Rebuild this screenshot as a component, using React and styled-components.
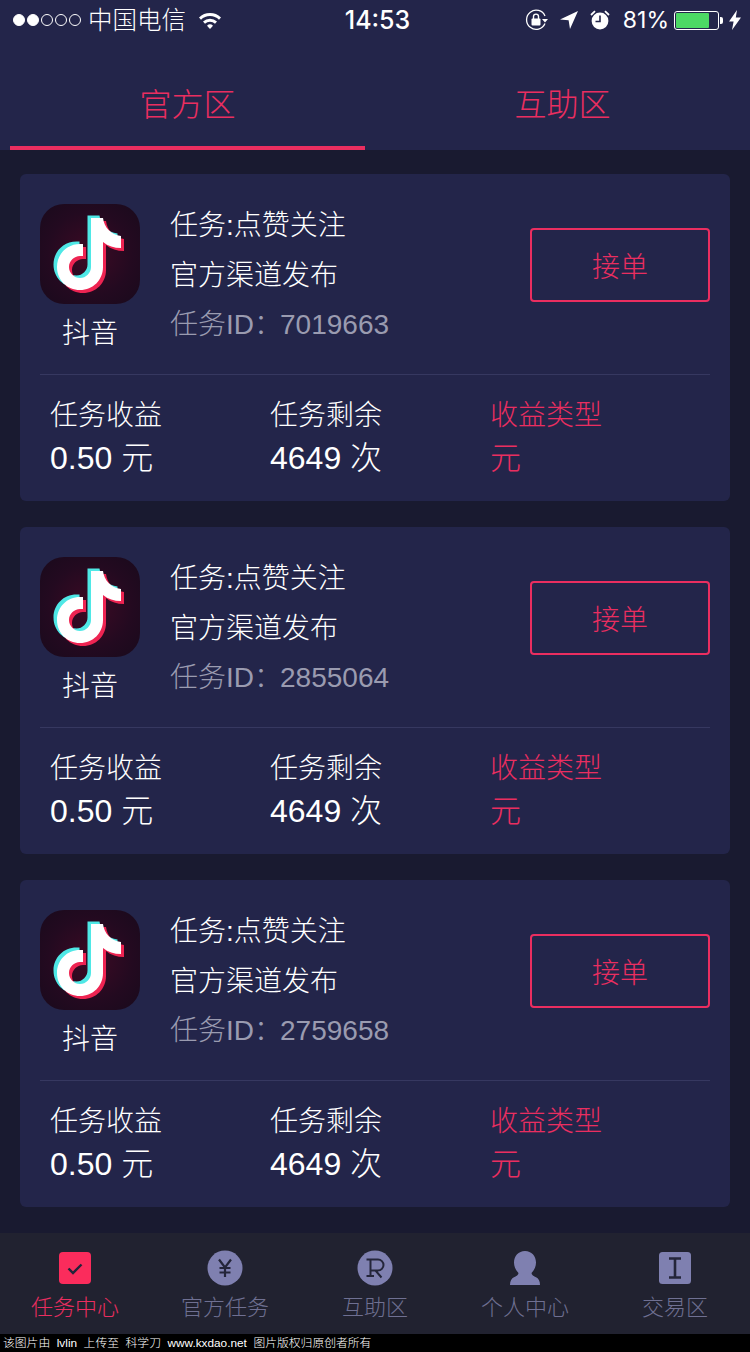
import React from 'react';
import styled, { createGlobalStyle } from 'styled-components';

const Global = createGlobalStyle`
  html, body { margin: 0; padding: 0; background: #191a30; }
  * { box-sizing: border-box; }
`;
const CJK = `"Liberation Sans", "Noto Sans CJK SC", sans-serif`;
const PINK = '#ea2e60';

const Page = styled.div`
  width: 750px; height: 1352px; display: flex; flex-direction: column; overflow: hidden;
  background: #191a30; font-family: ${CJK}; color: #fff;
`;
const StatusBar = styled.div`
  height: 40px; flex: none; background: #23254a; display: grid; grid-template-columns: 1fr auto 1fr;
  align-items: center; padding: 0 9px 0 13px; font-size: 24px;
`;
const StatusLeft = styled.div`display: flex; align-items: center;`;
const StatusRight = styled.div`display: flex; align-items: center; justify-content: flex-end;`;
const Dot = styled.span`
  width: 12px; height: 12px; border-radius: 50%; margin-right: 2px; flex: none;
  background: ${p => (p.$on ? '#fff' : 'transparent')}; border: 1px solid #fff;
`;
const Carrier = styled.span`margin: 0 12px 3px 5px; font-weight: 300; font-size: 24.5px;`;
const Time = styled.div`font-weight: 500; font-family: "Inter", sans-serif; font-size: 25px; margin-left: 1px;`;
const Percent = styled.span`margin: 0 5px 0 13px; font-family: "Inter", sans-serif; font-weight: 400; font-size: 23px; white-space: nowrap;`;
const Battery = styled.span`
  position: relative; width: 45px; height: 19px; border: 1px solid #fff; border-radius: 3px; padding: 1px; flex: none; margin-right: 10px;
`;
const BatteryFill = styled.span`display: block; height: 100%; width: 81%; background: #4cd964; border-radius: 1px;`;
const BatteryTip = styled.span`
  position: absolute; right: -5px; top: 5px; width: 3px; height: 7px; background: #fff; border-radius: 0 2px 2px 0;
`;

const Tabs = styled.div`
  height: 110px; flex: none; background: #23254a; display: flex; padding: 0 10px; 
`;
const Tab = styled.div`
  width: 355px; margin-right: ${p => (p.$last ? 0 : '20px')}; height: 110px; display: flex; align-items: center; justify-content: center;
  font-size: 32px; color: ${PINK}; padding-top: 18px; font-weight: 300;
  border-bottom: 4px solid ${p => (p.$active ? PINK : 'transparent')};
`;

const List = styled.div`
  flex: 1; min-height: 0; padding: 24px 20px 0; display: flex; flex-direction: column; gap: 26px; overflow: hidden;
`;
const Card = styled.div`
  height: 327px; flex: none; background: #23254a; border-radius: 6px; padding: 0 20px;
`;
const TopRow = styled.div`
  height: 201px; display: flex; align-items: flex-start; border-bottom: 1px solid #363860;
`;
const AppCol = styled.div`
  width: 100px; margin-top: 30px; display: flex; flex-direction: column; align-items: center; flex: none;
`;
const AppIcon = styled.div`
  width: 100px; height: 100px; border-radius: 24px; overflow: hidden;
  background: radial-gradient(circle at 50% 50%, #3d0a24 0%, #230a20 60%, #190a1c 100%);
`;
const AppName = styled.div`font-size: 28px; line-height: 40px; margin-top: 10px; font-weight: 300;`;
const Info = styled.div`margin: 27px 0 0 30px; font-size: 28px; line-height: 50px; font-weight: 300;`;
const InfoLine = styled.div`color: ${p => (p.$muted ? '#9a9bb0' : '#fff')}; white-space: nowrap; margin-top: ${p => (p.$muted ? '-1px' : 0)};`;
const IdMark = styled.span`margin-right: -2px;`;
const Button = styled.div`
  margin: 54px 0 0 auto; width: 180px; height: 74px; border: 2px solid ${PINK}; border-radius: 4px; display: flex;
  align-items: center; justify-content: center; font-size: 28px; color: ${PINK}; font-weight: 300;
`;
const Stats = styled.div`
  display: grid; grid-template-columns: 220px 220px 220px; padding: 20px 0 0 10px;
`;
const Stat = styled.div`font-size: 28px; color: ${p => (p.$pink ? PINK : '#fff')}; font-weight: 300;`;
const StatLabel = styled.div`line-height: 42px;`;
const StatValue = styled.div`line-height: ${p => (p.$big ? '42px' : '44px')}; font-size: ${p => (p.$big ? '32px' : '31px')};`;

const Nav = styled.div`
  height: 101px; flex: none; background: #212230; display: grid; grid-template-columns: repeat(5, 150px);
`;
const NavItem = styled.div`
  display: flex; flex-direction: column; align-items: center; padding-top: 17px; font-size: 22px; color: ${p => (p.$active ? PINK : '#6f7092')};
  font-weight: 300;
`;
const NavIconBox = styled.div`height: 36px; display: flex; align-items: center; justify-content: center;`;
const NavLabel = styled.div`line-height: 30px; margin-top: 7px;`;
const Watermark = styled.div`
  height: 18px; flex: none; background: #000; color: #fff; font-size: 11.8px; line-height: 18px; padding-left: 3px; white-space: pre;
  font-family: ${CJK}; overflow: hidden; font-weight: 300;
`;

const NOTE = 'M51 14h12c1 9 8 17 18 18v12c-7 0-13-2-18-6v25c0 13-10 23-23 23s-23-10-23-23s10-23 23-23c1 0 2 0 3 0v12c-1 0-2 0-3 0c-6 0-11 5-11 11s5 11 11 11s11-5 11-11z';
const TikTok = () => (
  <svg width="100" height="100" viewBox="0 0 100 100">
    <path d={NOTE} fill="#4fe8e6" transform="translate(-3.5 -2.5)" />
    <path d={NOTE} fill="#ee2452" transform="translate(3 3)" />
    <path d={NOTE} fill="#fff" />
  </svg>
);

const Wifi = () => (
  <svg width="24" height="18" viewBox="0 0 24 18" style={{ flex: 'none' }}>
    <path d="M1 6.5a16 16 0 0 1 22 0l-2 2.2a13 13 0 0 0-18 0z" fill="#fff" />
    <path d="M5 10.6a10 10 0 0 1 14 0l-2 2.2a7 7 0 0 0-10 0z" fill="#fff" />
    <path d="M9 14.7a4.4 4.4 0 0 1 6 0l-3 3.2z" fill="#fff" />
  </svg>
);
const RotLock = () => (
  <svg width="24" height="22" viewBox="0 0 24 22" style={{ flex: 'none' }}>
    <path d="M20 14.5A9.6 9.6 0 1 1 20 7" fill="none" stroke="#fff" strokeWidth="1.3" />
    <path d="M17 10h6l-3 3.4z" fill="#fff" />
    <rect x="6.5" y="9.5" width="9" height="7" rx="1" fill="#fff" />
    <path d="M8.5 10V7.6a2.5 2.5 0 0 1 5 0V10" fill="none" stroke="#fff" strokeWidth="1.4" />
  </svg>
);
const Locate = () => (
  <svg width="18" height="18" viewBox="0 0 18 18" style={{ flex: 'none', margin: '0 12px 0 11px' }}>
    <path d="M18 0L0 8.5l8.6.8L10 18z" fill="#fff" />
  </svg>
);
const Alarm = () => (
  <svg width="20" height="20" viewBox="0 0 20 20" style={{ flex: 'none' }}>
    <circle cx="10" cy="11" r="8.4" fill="#fff" />
    <path d="M10 5.5V11.5H5.5" fill="none" stroke="#23254a" strokeWidth="1.6" />
    <path d="M1 5L5 1.2M19 5L15 1.2" stroke="#fff" strokeWidth="1.8" />
  </svg>
);
const Bolt = () => (
  <svg width="12" height="20" viewBox="0 0 12 20" style={{ flex: 'none' }}>
    <path d="M8 0L0 11.5h4.6L3 20l9-12.5H6.8z" fill="#fff" />
  </svg>
);

const IC = '#7f80b0';
const IconCheck = () => (
  <svg width="32" height="32" viewBox="0 0 32 32">
    <rect width="32" height="32" rx="4" fill="#fb2c5c" />
    <path d="M9.5 16.5l4.5 4.5 8.5-8.5" fill="none" stroke="#23243a" strokeWidth="2.4" />
  </svg>
);
const IconYuan = () => (
  <svg width="36" height="36" viewBox="0 0 36 36">
    <circle cx="18" cy="18" r="17.5" fill={IC} />
    <path d="M12 9.5l6 8 6-8M18 17.5V27M12.5 18h11M12.5 22.5h11" fill="none" stroke="#24253a" strokeWidth="2.2" />
  </svg>
);
const IconR = () => (
  <svg width="36" height="36" viewBox="0 0 36 36">
    <circle cx="18" cy="18" r="17.5" fill={IC} />
    <path d="M9.5 9.5H21a5.2 5.2 0 0 1 0 11H13.5M13.5 9.5V26M9.5 26H17M18.5 20.5L24.5 27.5" fill="none" stroke="#24253a" strokeWidth="2" />
  </svg>
);
const IconUser = () => (
  <svg width="32" height="36" viewBox="0 0 32 36">
    <path d="M16 1c6.5 0 11 5 11 11.5c0 4.500-2 8-4.500 10.500c0 2 2 3 5 4.500c2 1 3.500 3.500 3.500 7.500H1c0-4 1.500-6.500 3.500-7.500c3-1.500 5-2.500 5-4.500C7 20.500 5 17 5 12.500C5 6 9.500 1 16 1z" fill={IC} />
  </svg>
);
const IconI = () => (
  <svg width="32" height="32" viewBox="0 0 32 32">
    <rect width="32" height="32" rx="3.500" fill={IC} />
    <path d="M10 6.500h12M10 25.500h12M16 6.500v19" fill="none" stroke="#24253a" strokeWidth="2.600" />
  </svg>
);

const TASKS = ['7019663', '2855064', '2759658'];
const NAV = [
  ['任务中心', IconCheck, true],
  ['官方任务', IconYuan, false],
  ['互助区', IconR, false],
  ['个人中心', IconUser, false],
  ['交易区', IconI, false],
];

export default function App() {
  return (
    <Page>
      <Global />
      <StatusBar>
        <StatusLeft>
          {[1, 1, 0, 0, 0].map((on, i) => <Dot key={i} $on={!!on} />)}
          <Carrier>中国电信</Carrier>
          <Wifi />
        </StatusLeft>
        <Time>14:53</Time>
        <StatusRight>
          <RotLock />
          <Locate />
          <Alarm />
          <Percent>81%</Percent>
          <Battery><BatteryFill /><BatteryTip /></Battery>
          <Bolt />
        </StatusRight>
      </StatusBar>
      <Tabs>
        <Tab $active>官方区</Tab>
        <Tab $last>互助区</Tab>
      </Tabs>
      <List>
        {TASKS.map(id => (
          <Card key={id}>
            <TopRow>
              <AppCol>
                <AppIcon><TikTok /></AppIcon>
                <AppName>抖音</AppName>
              </AppCol>
              <Info>
                <InfoLine>任务:点赞关注</InfoLine>
                <InfoLine>官方渠道发布</InfoLine>
                <InfoLine $muted><IdMark>任务ID：</IdMark>{id}</InfoLine>
              </Info>
              <Button>接单</Button>
            </TopRow>
            <Stats>
              <Stat>
                <StatLabel>任务收益</StatLabel>
                <StatValue $big>0.50 元</StatValue>
              </Stat>
              <Stat>
                <StatLabel>任务剩余</StatLabel>
                <StatValue $big>4649 次</StatValue>
              </Stat>
              <Stat $pink>
                <StatLabel>收益类型</StatLabel>
                <StatValue>元</StatValue>
              </Stat>
            </Stats>
          </Card>
        ))}
      </List>
      <Nav>
        {NAV.map(([label, Icon, active]) => (
          <NavItem key={label} $active={active}>
            <NavIconBox><Icon /></NavIconBox>
            <NavLabel>{label}</NavLabel>
          </NavItem>
        ))}
      </Nav>
      <Watermark>{'该图片由  lvlin  上传至  科学刀  www.kxdao.net  图片版权归原创者所有'}</Watermark>
    </Page>
  );
}
